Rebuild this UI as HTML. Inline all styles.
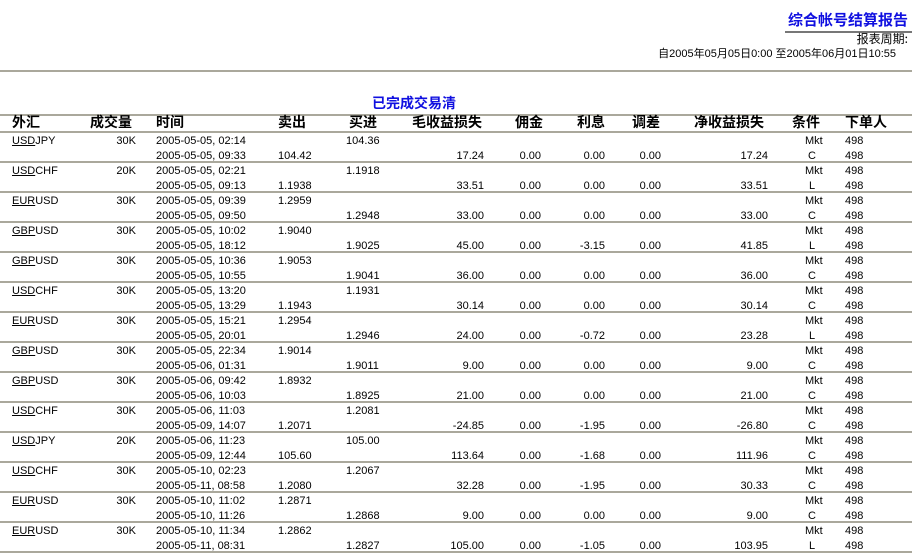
<!DOCTYPE html><html><head><meta charset="utf-8"><style>
body{margin:0;width:912px;height:553px;background:#fff;position:relative;overflow:hidden;font-family:"Liberation Sans","Noto Sans CJK SC",sans-serif;font-size:11px;color:#000}
div{position:absolute;white-space:nowrap}
.l{left:0;width:912px;height:2px;background:#aaa89c}
.h{top:114px;font-weight:bold;font-size:14px;font-family:"Noto Sans CJK SC","WenQuanYi Zen Hei",sans-serif;line-height:16px}
.r{left:0;width:912px;height:30px}
.r div{line-height:15px}
.a{top:2px}.b{top:17px}
u{text-decoration:underline}
</style></head><body>
<div style="right:4px;top:11px;color:#1010e0;font-weight:bold;font-size:15px;line-height:18px;font-family:'Noto Sans CJK SC',sans-serif">综合帐号结算报告</div>
<div style="left:785px;top:31px;width:127px;height:2px;background:#777"></div>
<div style="right:4px;top:30px;font-size:12px;font-family:'Noto Sans CJK SC',sans-serif">报表周期:</div>
<div style="right:16px;top:45px;font-size:11px;font-family:'Liberation Sans','Noto Sans CJK SC',sans-serif">自2005年05月05日0:00 至2005年06月01日10:55</div>
<div class="l" style="top:70px"></div>
<div style="left:372px;top:95px;color:#1010e0;font-weight:bold;font-size:14px;line-height:17px;font-family:'Noto Sans CJK SC',sans-serif">已完成交易清</div>
<div class="l" style="top:114px"></div>
<div class="h" style="left:12px">外汇</div><div class="h" style="left:90px">成交量</div><div class="h" style="left:156px">时间</div><div class="h" style="left:278px">卖出</div><div class="h" style="left:349px">买进</div><div class="h" style="left:412px">毛收益损失</div><div class="h" style="left:515px">佣金</div><div class="h" style="left:577px">利息</div><div class="h" style="left:632px">调差</div><div class="h" style="left:694px">净收益损失</div><div class="h" style="left:792px">条件</div><div class="h" style="left:845px">下单人</div>
<div class="l" style="top:131px"></div>
<div class="r" style="top:132px"><div class="a" style="left:12px"><u>USD</u>JPY</div><div class="a" style="right:776px">30K</div><div class="a" style="left:156px">2005-05-05, 02:14</div><div class="a" style="left:346px">104.36</div><div class="a" style="left:805px">Mkt</div><div class="a" style="left:845px">498</div><div class="b" style="left:156px">2005-05-05, 09:33</div><div class="b" style="left:278px">104.42</div><div class="b" style="right:428px">17.24</div><div class="b" style="right:371px">0.00</div><div class="b" style="right:307px">0.00</div><div class="b" style="right:251px">0.00</div><div class="b" style="right:144px">17.24</div><div class="b" style="left:808px">C</div><div class="b" style="left:845px">498</div></div>
<div class="l" style="top:161px"></div>
<div class="r" style="top:162px"><div class="a" style="left:12px"><u>USD</u>CHF</div><div class="a" style="right:776px">20K</div><div class="a" style="left:156px">2005-05-05, 02:21</div><div class="a" style="left:346px">1.1918</div><div class="a" style="left:805px">Mkt</div><div class="a" style="left:845px">498</div><div class="b" style="left:156px">2005-05-05, 09:13</div><div class="b" style="left:278px">1.1938</div><div class="b" style="right:428px">33.51</div><div class="b" style="right:371px">0.00</div><div class="b" style="right:307px">0.00</div><div class="b" style="right:251px">0.00</div><div class="b" style="right:144px">33.51</div><div class="b" style="left:809px">L</div><div class="b" style="left:845px">498</div></div>
<div class="l" style="top:191px"></div>
<div class="r" style="top:192px"><div class="a" style="left:12px"><u>EUR</u>USD</div><div class="a" style="right:776px">30K</div><div class="a" style="left:156px">2005-05-05, 09:39</div><div class="a" style="left:278px">1.2959</div><div class="a" style="left:805px">Mkt</div><div class="a" style="left:845px">498</div><div class="b" style="left:156px">2005-05-05, 09:50</div><div class="b" style="left:346px">1.2948</div><div class="b" style="right:428px">33.00</div><div class="b" style="right:371px">0.00</div><div class="b" style="right:307px">0.00</div><div class="b" style="right:251px">0.00</div><div class="b" style="right:144px">33.00</div><div class="b" style="left:808px">C</div><div class="b" style="left:845px">498</div></div>
<div class="l" style="top:221px"></div>
<div class="r" style="top:222px"><div class="a" style="left:12px"><u>GBP</u>USD</div><div class="a" style="right:776px">30K</div><div class="a" style="left:156px">2005-05-05, 10:02</div><div class="a" style="left:278px">1.9040</div><div class="a" style="left:805px">Mkt</div><div class="a" style="left:845px">498</div><div class="b" style="left:156px">2005-05-05, 18:12</div><div class="b" style="left:346px">1.9025</div><div class="b" style="right:428px">45.00</div><div class="b" style="right:371px">0.00</div><div class="b" style="right:307px">-3.15</div><div class="b" style="right:251px">0.00</div><div class="b" style="right:144px">41.85</div><div class="b" style="left:809px">L</div><div class="b" style="left:845px">498</div></div>
<div class="l" style="top:251px"></div>
<div class="r" style="top:252px"><div class="a" style="left:12px"><u>GBP</u>USD</div><div class="a" style="right:776px">30K</div><div class="a" style="left:156px">2005-05-05, 10:36</div><div class="a" style="left:278px">1.9053</div><div class="a" style="left:805px">Mkt</div><div class="a" style="left:845px">498</div><div class="b" style="left:156px">2005-05-05, 10:55</div><div class="b" style="left:346px">1.9041</div><div class="b" style="right:428px">36.00</div><div class="b" style="right:371px">0.00</div><div class="b" style="right:307px">0.00</div><div class="b" style="right:251px">0.00</div><div class="b" style="right:144px">36.00</div><div class="b" style="left:808px">C</div><div class="b" style="left:845px">498</div></div>
<div class="l" style="top:281px"></div>
<div class="r" style="top:282px"><div class="a" style="left:12px"><u>USD</u>CHF</div><div class="a" style="right:776px">30K</div><div class="a" style="left:156px">2005-05-05, 13:20</div><div class="a" style="left:346px">1.1931</div><div class="a" style="left:805px">Mkt</div><div class="a" style="left:845px">498</div><div class="b" style="left:156px">2005-05-05, 13:29</div><div class="b" style="left:278px">1.1943</div><div class="b" style="right:428px">30.14</div><div class="b" style="right:371px">0.00</div><div class="b" style="right:307px">0.00</div><div class="b" style="right:251px">0.00</div><div class="b" style="right:144px">30.14</div><div class="b" style="left:808px">C</div><div class="b" style="left:845px">498</div></div>
<div class="l" style="top:311px"></div>
<div class="r" style="top:312px"><div class="a" style="left:12px"><u>EUR</u>USD</div><div class="a" style="right:776px">30K</div><div class="a" style="left:156px">2005-05-05, 15:21</div><div class="a" style="left:278px">1.2954</div><div class="a" style="left:805px">Mkt</div><div class="a" style="left:845px">498</div><div class="b" style="left:156px">2005-05-05, 20:01</div><div class="b" style="left:346px">1.2946</div><div class="b" style="right:428px">24.00</div><div class="b" style="right:371px">0.00</div><div class="b" style="right:307px">-0.72</div><div class="b" style="right:251px">0.00</div><div class="b" style="right:144px">23.28</div><div class="b" style="left:809px">L</div><div class="b" style="left:845px">498</div></div>
<div class="l" style="top:341px"></div>
<div class="r" style="top:342px"><div class="a" style="left:12px"><u>GBP</u>USD</div><div class="a" style="right:776px">30K</div><div class="a" style="left:156px">2005-05-05, 22:34</div><div class="a" style="left:278px">1.9014</div><div class="a" style="left:805px">Mkt</div><div class="a" style="left:845px">498</div><div class="b" style="left:156px">2005-05-06, 01:31</div><div class="b" style="left:346px">1.9011</div><div class="b" style="right:428px">9.00</div><div class="b" style="right:371px">0.00</div><div class="b" style="right:307px">0.00</div><div class="b" style="right:251px">0.00</div><div class="b" style="right:144px">9.00</div><div class="b" style="left:808px">C</div><div class="b" style="left:845px">498</div></div>
<div class="l" style="top:371px"></div>
<div class="r" style="top:372px"><div class="a" style="left:12px"><u>GBP</u>USD</div><div class="a" style="right:776px">30K</div><div class="a" style="left:156px">2005-05-06, 09:42</div><div class="a" style="left:278px">1.8932</div><div class="a" style="left:805px">Mkt</div><div class="a" style="left:845px">498</div><div class="b" style="left:156px">2005-05-06, 10:03</div><div class="b" style="left:346px">1.8925</div><div class="b" style="right:428px">21.00</div><div class="b" style="right:371px">0.00</div><div class="b" style="right:307px">0.00</div><div class="b" style="right:251px">0.00</div><div class="b" style="right:144px">21.00</div><div class="b" style="left:808px">C</div><div class="b" style="left:845px">498</div></div>
<div class="l" style="top:401px"></div>
<div class="r" style="top:402px"><div class="a" style="left:12px"><u>USD</u>CHF</div><div class="a" style="right:776px">30K</div><div class="a" style="left:156px">2005-05-06, 11:03</div><div class="a" style="left:346px">1.2081</div><div class="a" style="left:805px">Mkt</div><div class="a" style="left:845px">498</div><div class="b" style="left:156px">2005-05-09, 14:07</div><div class="b" style="left:278px">1.2071</div><div class="b" style="right:428px">-24.85</div><div class="b" style="right:371px">0.00</div><div class="b" style="right:307px">-1.95</div><div class="b" style="right:251px">0.00</div><div class="b" style="right:144px">-26.80</div><div class="b" style="left:808px">C</div><div class="b" style="left:845px">498</div></div>
<div class="l" style="top:431px"></div>
<div class="r" style="top:432px"><div class="a" style="left:12px"><u>USD</u>JPY</div><div class="a" style="right:776px">20K</div><div class="a" style="left:156px">2005-05-06, 11:23</div><div class="a" style="left:346px">105.00</div><div class="a" style="left:805px">Mkt</div><div class="a" style="left:845px">498</div><div class="b" style="left:156px">2005-05-09, 12:44</div><div class="b" style="left:278px">105.60</div><div class="b" style="right:428px">113.64</div><div class="b" style="right:371px">0.00</div><div class="b" style="right:307px">-1.68</div><div class="b" style="right:251px">0.00</div><div class="b" style="right:144px">111.96</div><div class="b" style="left:808px">C</div><div class="b" style="left:845px">498</div></div>
<div class="l" style="top:461px"></div>
<div class="r" style="top:462px"><div class="a" style="left:12px"><u>USD</u>CHF</div><div class="a" style="right:776px">30K</div><div class="a" style="left:156px">2005-05-10, 02:23</div><div class="a" style="left:346px">1.2067</div><div class="a" style="left:805px">Mkt</div><div class="a" style="left:845px">498</div><div class="b" style="left:156px">2005-05-11, 08:58</div><div class="b" style="left:278px">1.2080</div><div class="b" style="right:428px">32.28</div><div class="b" style="right:371px">0.00</div><div class="b" style="right:307px">-1.95</div><div class="b" style="right:251px">0.00</div><div class="b" style="right:144px">30.33</div><div class="b" style="left:808px">C</div><div class="b" style="left:845px">498</div></div>
<div class="l" style="top:491px"></div>
<div class="r" style="top:492px"><div class="a" style="left:12px"><u>EUR</u>USD</div><div class="a" style="right:776px">30K</div><div class="a" style="left:156px">2005-05-10, 11:02</div><div class="a" style="left:278px">1.2871</div><div class="a" style="left:805px">Mkt</div><div class="a" style="left:845px">498</div><div class="b" style="left:156px">2005-05-10, 11:26</div><div class="b" style="left:346px">1.2868</div><div class="b" style="right:428px">9.00</div><div class="b" style="right:371px">0.00</div><div class="b" style="right:307px">0.00</div><div class="b" style="right:251px">0.00</div><div class="b" style="right:144px">9.00</div><div class="b" style="left:808px">C</div><div class="b" style="left:845px">498</div></div>
<div class="l" style="top:521px"></div>
<div class="r" style="top:522px"><div class="a" style="left:12px"><u>EUR</u>USD</div><div class="a" style="right:776px">30K</div><div class="a" style="left:156px">2005-05-10, 11:34</div><div class="a" style="left:278px">1.2862</div><div class="a" style="left:805px">Mkt</div><div class="a" style="left:845px">498</div><div class="b" style="left:156px">2005-05-11, 08:31</div><div class="b" style="left:346px">1.2827</div><div class="b" style="right:428px">105.00</div><div class="b" style="right:371px">0.00</div><div class="b" style="right:307px">-1.05</div><div class="b" style="right:251px">0.00</div><div class="b" style="right:144px">103.95</div><div class="b" style="left:809px">L</div><div class="b" style="left:845px">498</div></div>
<div class="l" style="top:551px"></div>
</body></html>
